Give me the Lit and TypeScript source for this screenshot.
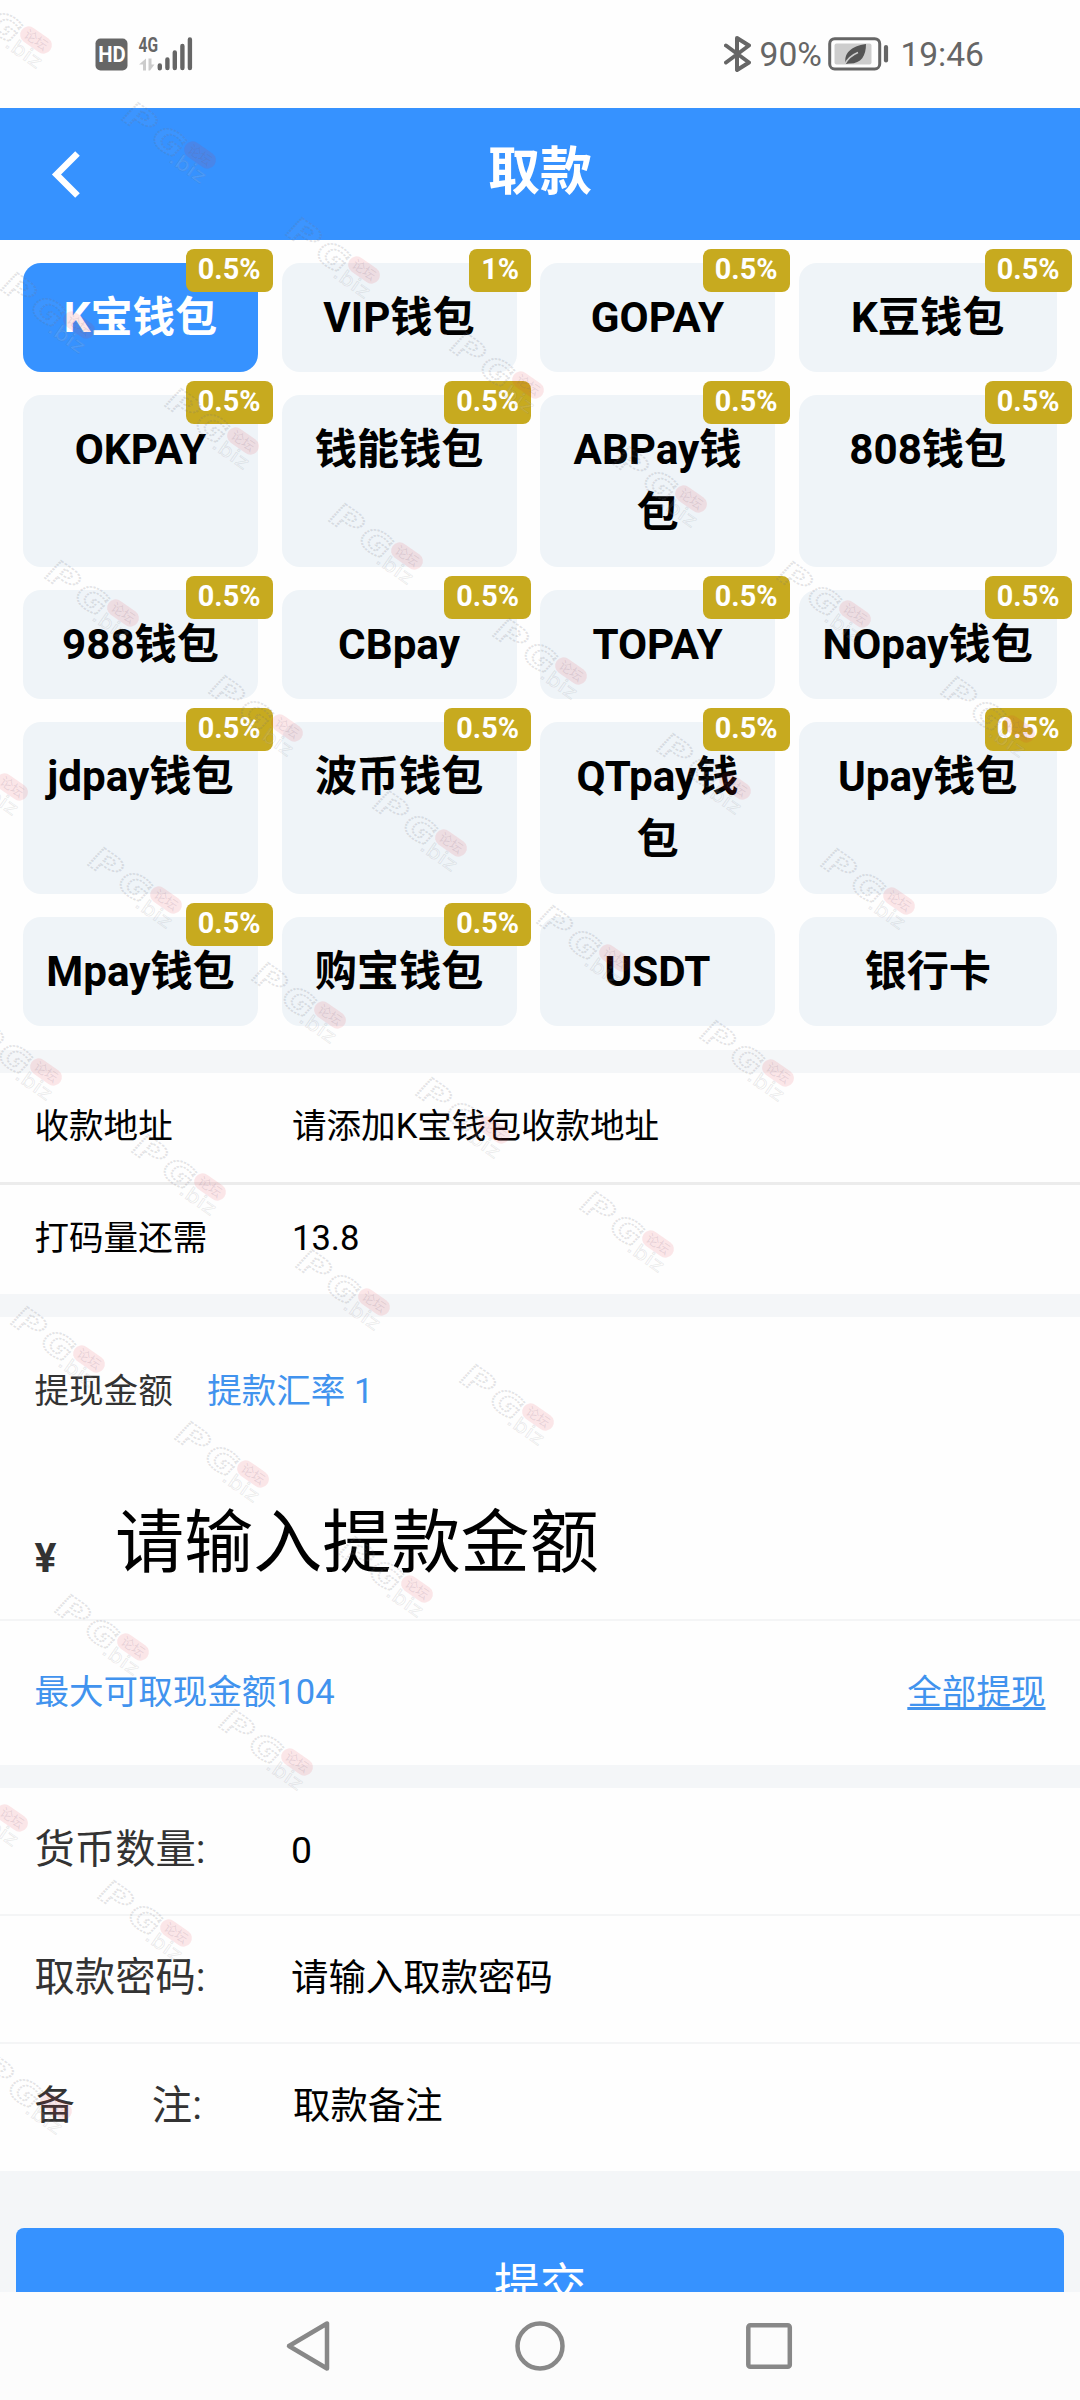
import { LitElement, html, css, svg, nothing } from "lit";
import { customElement, property } from "lit/decorators.js";
import { classMap } from "lit/directives/class-map.js";

interface Wallet {
  name: string;
  rate?: string;
}

const WALLETS: Wallet[] = [
  { name: "K宝钱包", rate: "0.5%" },
  { name: "VIP钱包", rate: "1%" },
  { name: "GOPAY", rate: "0.5%" },
  { name: "K豆钱包", rate: "0.5%" },
  { name: "OKPAY", rate: "0.5%" },
  { name: "钱能钱包", rate: "0.5%" },
  { name: "ABPay钱包", rate: "0.5%" },
  { name: "808钱包", rate: "0.5%" },
  { name: "988钱包", rate: "0.5%" },
  { name: "CBpay", rate: "0.5%" },
  { name: "TOPAY", rate: "0.5%" },
  { name: "NOpay钱包", rate: "0.5%" },
  { name: "jdpay钱包", rate: "0.5%" },
  { name: "波币钱包", rate: "0.5%" },
  { name: "QTpay钱包", rate: "0.5%" },
  { name: "Upay钱包", rate: "0.5%" },
  { name: "Mpay钱包", rate: "0.5%" },
  { name: "购宝钱包", rate: "0.5%" },
  { name: "USDT" },
  { name: "银行卡" },
];

/* Each diagonal run of watermarks: first mark's centre and how many follow. */
const MARK_RUNS: [number, number, number][] = [
  [36, 40, 4],
  [79, 325, 1],
  [243, 441, 5],
  [691, 499, 3],
  [123, 613, 4],
  [12, 787, 1],
  [166, 900, 3],
  [778, 1073, 1],
  [46, 1072, 1],
  [210, 1187, 3],
  [658, 1244, 1],
  [89, 1359, 3],
  [133, 1647, 2],
  [12, 1818, 2],
  [56, 2106, 1],
];

function markPoints(): [number, number][] {
  const out: [number, number][] = [];
  for (const [x0, y0, n] of MARK_RUNS) {
    for (let i = 0; i < n; i++) {
      const x = x0 + 164 * i;
      const y = y0 + 115 * i;
      if (!out.some((q) => Math.abs(q[0] - x) < 20 && Math.abs(q[1] - y) < 20)) out.push([x, y]);
    }
  }
  return out;
}

@customElement("status-bar")
class StatusBar extends LitElement {
  static styles = css`
    :host {
      display: flex;
      justify-content: space-between;
      align-items: center;
      height: 108px;
      padding: 0 96px 0 95px;
      box-sizing: border-box;
      background: #fefefe;
      color: #666;
      font-size: 33.600px;
    }
    .right {
      display: flex;
      align-items: center;
      line-height: 40px;
    }
    .right span { padding-top: 2px; }
    .bt { margin-right: 8.500px; }
    .battery { margin: 0 11.500px 0 6px; }
    svg { display: block; }
    .hd { font: bold 22px "Roboto", sans-serif; }
    .net { font: bold 21px "Roboto", sans-serif; }
  `;
  render() {
    return html`
      <svg width="98" height="36" viewBox="95 36 98 36">
        <rect x="95.500" y="38.500" width="32" height="32" rx="5" fill="#666" />
        <text class="hd" x="98.2" y="62" fill="#fff" textLength="27.500" lengthAdjust="spacingAndGlyphs">HD</text>
        <text class="net" x="138.500" y="52" fill="#666" textLength="19.500" lengthAdjust="spacingAndGlyphs">4G</text>
        <path d="M146 58.500v12h-3v-6h-4zM148.500 58.500v12h1.500l4.500-6h-3v-6z" fill="#ccc" />
        <path d="M159.800 65.500v2.700M167.400 59.500v8.500M174.800 52.500v15.500M182.400 46v22M189.900 39.500v28.500" stroke="#666" stroke-width="4.400" stroke-linecap="round" />
      </svg>
      <div class="right">
        <svg class="bt" width="27" height="36" viewBox="0 0 27 36">
          <path d="M2 9.500 25 26.500 13 34V2L25 9.500 2 26.500" fill="none" stroke="#666" stroke-width="4" stroke-linejoin="round" stroke-linecap="round" />
        </svg>
        <span>90%</span>
        <svg class="battery" width="61" height="34" viewBox="0 0 61 34">
          <rect x="1.700" y="1.700" width="50" height="30.200" rx="5" fill="none" stroke="#666" stroke-width="3" />
          <rect x="6.500" y="6.500" width="37" height="21" rx="2" fill="#cdcdcd" />
          <path d="M18 27C15 17 23 9 38 7C38 19 33 27 21 26.500L18 27Z" fill="#555" />
          <path d="M17 27C20 21 24 18 30 15.500" stroke="#cdcdcd" stroke-width="1.600" fill="none" />
          <path d="M58 10v13.500" stroke="#666" stroke-width="4.200" stroke-linecap="round" />
        </svg>
        <span>19:46</span>
      </div>
    `;
  }
}

@customElement("wallet-tile")
class WalletTile extends LitElement {
  @property() name = "";
  @property() rate?: string;
  @property({ type: Boolean }) active = false;
  static styles = css`
    :host { display: block; }
    .tile {
      position: relative;
      box-sizing: border-box;
      height: 100%;
      padding: 22.500px 22px 23px;
      border-radius: 18px;
      background: #eff4f8;
      color: #000;
      font-size: 42.200px;
      line-height: 63px;
      font-weight: 700;
      text-align: center;
      word-break: break-all;
    }
    .tile.active { background: #3692ff; color: #fff; }
    .badge {
      position: absolute;
      top: -14px;
      right: -14.500px;
      height: 43px;
      padding: 0 12px;
      border-radius: 8px;
      background: #c7aa1f;
      color: #fff;
      font-size: 28.800px;
      line-height: 41px;
    }
  `;
  render() {
    return html`<div class=${classMap({ tile: true, active: this.active })}>
      ${this.name}${this.rate ? html`<span class="badge">${this.rate}</span>` : nothing}
    </div>`;
  }
}

@customElement("water-marks")
class WaterMarks extends LitElement {
  static styles = css`
    :host {
      position: absolute;
      inset: 0;
      pointer-events: none;
      overflow: hidden;
    }
    svg { display: block; }
    .big {
      font: bold 32px "DejaVu Sans", sans-serif;
      fill: rgba(255, 255, 255, 0.05);
      stroke: rgba(110, 110, 125, 0.19);
      stroke-width: 1.800;
      stroke-dasharray: 2 1;
    }
    .tail {
      font: 19px "DejaVu Sans", sans-serif;
      fill: rgba(255, 255, 255, 0.1);
      stroke: rgba(110, 110, 125, 0.15);
      stroke-width: 0.800;
    }
    .pill { fill: rgba(232, 40, 55, 0.11); }
    .pilltext {
      font: 13px "Noto Sans CJK SC", sans-serif;
      fill: rgba(120, 100, 120, 0.16);
    }
  `;
  render() {
    return html`<svg width="1080" height="2400" viewBox="0 0 1080 2400">
      ${markPoints().map(
        ([x, y]) => svg`<g transform="translate(${x} ${y}) rotate(35)">
          <text class="big" transform="translate(-88 16) skewX(-8) scale(1.42 1)">P</text>
          <text class="big" transform="translate(-51 18) skewX(-8) scale(1.22 1)">G</text>
          <rect class="pill" x="-17.500" y="-8.500" width="35" height="17" rx="8.500" />
          <text class="pilltext" x="-13" y="4.700">论坛</text>
          <text class="tail" x="-23" y="23.500" textLength="40" lengthAdjust="spacingAndGlyphs">.biz</text>
        </g>`
      )}
    </svg>`;
  }
}

@customElement("app-root")
class AppRoot extends LitElement {
  static styles = css`
    :host {
      position: relative;
      display: flex;
      flex-direction: column;
      width: 1080px;
      height: 2400px;
      overflow: hidden;
      background: #f4f6f8;
      color: #000;
      font-family: "Roboto", "Noto Sans CJK SC", sans-serif;
      font-size: 34.560px;
    }
    .header {
      display: grid;
      grid-template-columns: 132px 1fr 132px;
      align-items: center;
      height: 132px;
      flex: none;
      background: #3692ff;
      color: #fff;
    }
    .back { margin-left: 51px; display: block; }
    .title {
      font-size: 52px;
      font-weight: 700;
      line-height: 60px;
      padding-bottom: 2px;
      text-align: center;
    }
    .wallets {
      display: grid;
      grid-template-columns: 235px 235px 235px 258.500px;
      column-gap: 23.500px;
      row-gap: 23.500px;
      box-sizing: border-box;
      height: 810px;
      flex: none;
      align-content: start;
      padding: 23px 23px 0;
      background: #fefefe;
    }
    .band { height: 23px; flex: none; }
    .row {
      display: flex;
      align-items: center;
      flex: none;
      box-sizing: border-box;
      padding: 0 34.500px;
      line-height: 48px;
      background: #fefefe;
    }
    .info { height: 109px; padding-bottom: 3px; }
    .info.lined { height: 112px; border-bottom: 3px solid #ececec; }
    .label { width: 257.500px; }
    .amount {
      display: flex;
      flex-direction: column;
      flex: none;
      box-sizing: border-box;
      height: 304px;
      padding: 50px 34.500px 0;
      border-bottom: 2px solid #f4f5f6;
      background: #fefefe;
    }
    .heading {
      display: flex;
      gap: 34.560px;
      color: #333;
      line-height: 48px;
    }
    .blue { color: #4193ee; }
    .entry {
      display: flex;
      align-items: baseline;
      margin-top: 79px;
      line-height: 100px;
    }
    .yen {
      width: 80.500px;
      font-size: 41px;
      line-height: 60px;
      font-weight: 700;
      color: #333;
      transform: translateY(5px);
    }
    .big { font-size: 69.120px; }
    .max { height: 144px; justify-content: space-between; padding-bottom: 3px; }
    .all {
      text-decoration: underline;
      text-decoration-thickness: 3px;
      text-underline-offset: 3px;
      text-decoration-skip-ink: none;
    }
    .field { height: 128px; padding-bottom: 2px; border-bottom: 2px solid #f4f5f6; font-size: 37.440px; }
    .field:last-of-type { height: 127px; border-bottom: none; padding-bottom: 4px; }
    .field .label { width: 256.500px; font-size: 40.320px; color: #333; }
    .spread { display: inline-flex; gap: 77px; }
    .note { padding-left: 2px; }
    .submit-area {
      flex: 1;
      min-height: 0;
      overflow: hidden;
      padding: 57px 16px 0;
    }
    .submit {
      height: 118px;
      border-radius: 8px;
      background: #3692ff;
      color: #fff;
      font-size: 46.080px;
      line-height: 116px;
      text-align: center;
    }
    .nav {
      display: flex;
      flex: none;
      justify-content: center;
      align-items: center;
      gap: 179px;
      height: 108px;
      background: #fcfcfc;
    }
    .nav svg { display: block; }
  `;
  render() {
    return html`
      <status-bar></status-bar>
      <div class="header">
        <svg class="back" width="30" height="48" viewBox="0 0 30 48">
          <path d="M26.500 3.500 5.500 24.500 26.500 45.500" fill="none" stroke="#fff" stroke-width="6.500" />
        </svg>
        <div class="title">取款</div>
      </div>
      <div class="wallets">
        ${WALLETS.map(
          (w, i) => html`<wallet-tile .name=${w.name} .rate=${w.rate} .active=${i === 0}></wallet-tile>`
        )}
      </div>
      <div class="band"></div>
      <div class="row info lined"><span class="label">收款地址</span><span>请添加K宝钱包收款地址</span></div>
      <div class="row info"><span class="label">打码量还需</span><span>13.8</span></div>
      <div class="band"></div>
      <div class="amount">
        <div class="heading"><span>提现金额</span><span class="blue">提款汇率 1</span></div>
        <div class="entry"><span class="yen">¥</span><span class="big">请输入提款金额</span></div>
      </div>
      <div class="row max blue"><span>最大可取现金额104</span><span class="all">全部提现</span></div>
      <div class="band"></div>
      <div class="row field"><span class="label">货币数量:</span><span>0</span></div>
      <div class="row field"><span class="label">取款密码:</span><span>请输入取款密码</span></div>
      <div class="row field">
        <span class="label"><span class="spread"><span>备</span><span>注:</span></span></span
        ><span class="note">取款备注</span>
      </div>
      <section class="submit-area"><div class="submit">提交</div></section>
      <nav class="nav">
        <svg width="50" height="54" viewBox="0 0 50 54">
          <path d="M43 4.500V49.500L5 27Z" fill="none" stroke="#888" stroke-width="4.500" stroke-linejoin="round" />
        </svg>
        <svg width="54" height="54" viewBox="0 0 54 54">
          <circle cx="27" cy="27" r="22.500" fill="none" stroke="#888" stroke-width="4.500" />
        </svg>
        <svg width="50" height="54" viewBox="0 0 50 54">
          <rect x="2.300" y="6.200" width="41.500" height="41.500" rx="2" fill="none" stroke="#888" stroke-width="4.500" />
        </svg>
      </nav>
      <water-marks></water-marks>
    `;
  }
}
